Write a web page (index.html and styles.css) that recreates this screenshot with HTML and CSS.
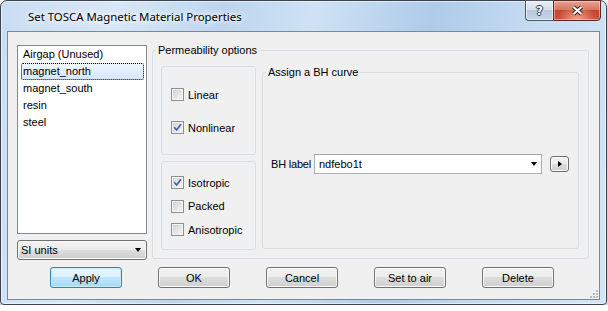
FILE: index.html
```html
<!DOCTYPE html>
<html lang="en">

<head>
    <meta charset="UTF-8">
    <meta name="viewport" content="width=device-width, initial-scale=1.0">
    <title>Set TOSCA Magnetic Material Properties</title>
    <link rel="stylesheet" href="styles.css">
</head>

<body>
    <div class="window">
        <!--title bar-->
        <div class="titlebar">
            <span class="title">Set TOSCA Magnetic Material Properties</span>
            <div class="caption">
                <div class="cap-btn help">?</div>
                <div class="cap-btn close">
                    <svg width="13" height="11" viewBox="0 0 13 11">
                        <path d="M2.5 2 L10.5 9 M10.5 2 L2.5 9" stroke="#3a1e1e" stroke-width="4.2" fill="none" />
                        <path d="M2.5 2 L10.5 9 M10.5 2 L2.5 9" stroke="#fff" stroke-width="2.2" fill="none" />
                    </svg>
                </div>
            </div>
        </div>

        <div class="client">
            <div class="main">
                <!--material list-->
                <div class="left-col">
                    <ul class="listbox">
                        <li>Airgap (Unused)</li>
                        <li class="selected">magnet_north</li>
                        <li>magnet_south</li>
                        <li>resin</li>
                        <li>steel</li>
                    </ul>
                    <div class="dropdown">
                        <span>SI units</span>
                        <span class="arrow-down"></span>
                    </div>
                </div>

                <!--permeability group-->
                <fieldset class="group perm">
                    <legend>Permeability options</legend>
                    <div class="perm-body">
                        <div class="options">
                            <div class="subgroup first">
                                <div class="check"><span class="box"></span>Linear</div>
                                <div class="check">
                                    <span class="box">
                                        <svg width="9" height="9" viewBox="0 0 9 9">
                                            <path d="M1.2 4.3 L3.6 7 L8 1.3" fill="none" stroke="#4160a0" stroke-width="1.7" />
                                        </svg>
                                    </span>Nonlinear
                                </div>
                            </div>
                            <div class="subgroup second">
                                <div class="check">
                                    <span class="box">
                                        <svg width="9" height="9" viewBox="0 0 9 9">
                                            <path d="M1.2 4.3 L3.6 7 L8 1.3" fill="none" stroke="#4160a0" stroke-width="1.7" />
                                        </svg>
                                    </span>Isotropic
                                </div>
                                <div class="check"><span class="box"></span>Packed</div>
                                <div class="check"><span class="box"></span>Anisotropic</div>
                            </div>
                        </div>

                        <fieldset class="group bh">
                            <legend>Assign a BH curve</legend>
                            <div class="bh-row">
                                <span class="bh-label">BH label</span>
                                <div class="combo">
                                    <span>ndfebo1t</span>
                                    <span class="arrow-down"></span>
                                </div>
                                <div class="small-btn"><span class="arrow-right"></span></div>
                            </div>
                        </fieldset>
                    </div>
                </fieldset>
            </div>

            <div class="buttons">
                <div class="btn default">Apply</div>
                <div class="btn">OK</div>
                <div class="btn">Cancel</div>
                <div class="btn">Set to air</div>
                <div class="btn">Delete</div>
            </div>

            <!--resize grip-->
            <svg class="grip" width="8" height="9" viewBox="0 0 8 9">
                <rect x="6" y="1" width="2" height="2" fill="#b8b8b8" />
                <rect x="6" y="4" width="2" height="2" fill="#b8b8b8" />
                <rect x="3" y="4" width="2" height="2" fill="#b8b8b8" />
                <rect x="6" y="7" width="2" height="2" fill="#b8b8b8" />
                <rect x="3" y="7" width="2" height="2" fill="#b8b8b8" />
                <rect x="0" y="7" width="2" height="2" fill="#b8b8b8" />
            </svg>
        </div>
    </div>
</body>

</html>
```

FILE: styles.css
```css
body {
    margin: 0;
    background-color: #fff;
    font-family: "Liberation Sans", Arial, sans-serif;
    font-size: 11px;
    color: #000;
}

/*aero pencere çerçevesi*/
.window {
    width: 607px;
    height: 305px;
    box-sizing: border-box;
    border: 1px solid #3a4350;
    border-radius: 7px 7px 4px 4px;
    background: linear-gradient(100deg, #c9ddf2 0%, #d7e7f7 18%, #bcd5ee 34%, #cfe2f5 48%, #aecbe9 66%, #c6dcf2 82%, #d4e5f6 100%);
    box-shadow: 0 2px 5px rgba(0, 0, 0, 0.45), inset 0 0 0 1px rgba(255, 255, 255, 0.55);
    display: flex;
    flex-direction: column;
}

.titlebar {
    height: 30px;
    display: flex;
    align-items: flex-start;
    padding: 0 5px 0 27px;
    flex-shrink: 0;
}

.title {
    font-family: "Noto Sans", sans-serif;
    font-size: 11.4px;
    line-height: 15px;
    margin-top: 8px;
    text-shadow: 0 0 8px #fff, 0 0 8px #fff, 0 0 4px rgba(255, 255, 255, 0.8);
}

.caption {
    margin-left: auto;
    margin-top: -1px;
    display: flex;
}

.cap-btn {
    height: 21px;
    box-sizing: border-box;
    border: 1px solid #4b5868;
    display: flex;
    align-items: center;
    justify-content: center;
}

.help {
    width: 28px;
    border-right: none;
    border-radius: 0 0 0 4px;
    background: linear-gradient(#e8eef6 0%, #d5e0ec 45%, #b9c9dc 50%, #c4d3e3 100%);
    box-shadow: inset 0 0 0 1px rgba(255, 255, 255, 0.6);
    font-family: "DejaVu Sans", sans-serif;
    font-weight: bold;
    font-size: 12px;
    color: #fff;
    text-shadow: 1px 0 0 #2d3848, -1px 0 0 #2d3848, 0 1px 0 #2d3848, 0 -1px 0 #2d3848;
}

.close {
    width: 48px;
    border-color: #5a2a24;
    border-radius: 0 0 4px 0;
    background: radial-gradient(ellipse at 50% 100%, #eea48a 0%, rgba(238, 164, 138, 0) 60%), linear-gradient(#e7a596 0%, #d9735f 45%, #c54631 50%, #c9503a 100%);
    box-shadow: inset 0 0 0 1px rgba(255, 220, 210, 0.5);
}

/*pencere içeriği*/
.client {
    flex: 1;
    margin: 0 6px 4px;
    background-color: #f0f0f0;
    border: 1px solid #7b8898;
    padding: 12px 10px 0 9px;
    display: flex;
    flex-direction: column;
    position: relative;
}

.main {
    display: flex;
    gap: 5px;
    height: 216px;
}

.left-col {
    width: 130px;
    display: flex;
    flex-direction: column;
    gap: 6px;
}

.listbox {
    list-style: none;
    margin: 1px 0 0;
    padding: 0;
    height: 189px;
    box-sizing: border-box;
    background-color: #fff;
    border: 1px solid #828790;
}

.listbox li {
    height: 17px;
    line-height: 15px;
    box-sizing: border-box;
    margin: 0 2px 0 3px;
    padding: 0 1px;
    border: 1px solid transparent;
    white-space: nowrap;
}

/*seçili malzeme*/
.listbox li.selected {
    border: 1px dotted #000;
    border-radius: 2px;
    background: linear-gradient(#eef5fd, #d6e7fb);
}

.dropdown {
    height: 20px;
    box-sizing: border-box;
    border: 1px solid #707070;
    border-radius: 3px;
    background: linear-gradient(#f2f2f2 0%, #ebebeb 50%, #dddddd 50%, #cfcfcf 100%);
    box-shadow: inset 0 0 0 1px #fbfbfb;
    display: flex;
    align-items: center;
    justify-content: space-between;
    padding: 0 5px 0 3px;
}

.arrow-down {
    width: 0;
    height: 0;
    border-left: 3.5px solid transparent;
    border-right: 3.5px solid transparent;
    border-top: 4px solid #000;
}

.arrow-right {
    width: 0;
    height: 0;
    border-top: 3.5px solid transparent;
    border-bottom: 3.5px solid transparent;
    border-left: 4px solid #000;
}

/*grup kutuları*/
.group {
    margin: 0;
    border: 1px solid #d5dfe5;
    border-radius: 3px;
    min-width: 0;
}

.group legend {
    padding: 0 2px;
    margin-left: -5px;
    line-height: 13px;
}

.perm {
    flex: 1;
    margin-bottom: 1px;
    padding: 9px 9px 8px 8px;
}

.perm-body {
    display: flex;
    gap: 6px;
    height: 100%;
}

.options {
    width: 95px;
    display: flex;
    flex-direction: column;
    gap: 6px;
}

.subgroup {
    border: 1px solid #d5dfe5;
    border-radius: 3px;
    padding-left: 9px;
    display: flex;
    flex-direction: column;
}

.subgroup.first {
    height: 89px;
    box-sizing: border-box;
    padding-top: 21px;
    gap: 20px;
}

.subgroup.second {
    flex: 1;
    padding-top: 14px;
    gap: 10.5px;
}

.check {
    display: flex;
    align-items: center;
    gap: 4px;
    height: 13px;
    white-space: nowrap;
}

.box {
    width: 13px;
    height: 13px;
    box-sizing: border-box;
    border: 1px solid #8e8f8f;
    background: linear-gradient(135deg, #c9ccd1 0%, #e6e7e9 55%, #f7f7f7 100%);
    box-shadow: inset 0 0 0 1px #f4f4f4;
    display: flex;
    align-items: center;
    justify-content: center;
    flex-shrink: 0;
}

.bh {
    flex: 1;
    margin-bottom: 1px;
    padding: 0 9px 0 8px;
    display: flex;
    flex-direction: column;
    justify-content: center;
}

.bh-row {
    display: flex;
    align-items: center;
}

.bh-label {
    flex-shrink: 0;
    margin-right: 3px;
    letter-spacing: -0.2px;
}

.combo {
    flex: 1;
    height: 20px;
    box-sizing: border-box;
    background-color: #fff;
    border: 1px solid #abadb3;
    border-top-color: #a2a4a9;
    display: flex;
    align-items: center;
    justify-content: space-between;
    padding: 0 4px 0 4px;
}

.small-btn {
    width: 19px;
    height: 16px;
    margin-left: 8px;
    box-sizing: border-box;
    border: 1px solid #707070;
    border-radius: 3px;
    background: linear-gradient(#f2f2f2 0%, #ebebeb 50%, #dddddd 50%, #cfcfcf 100%);
    box-shadow: inset 0 0 0 1px #fbfbfb;
    display: flex;
    align-items: center;
    justify-content: center;
}

/*alt butonlar*/
.buttons {
    display: flex;
    gap: 36px;
    margin-top: 7px;
    padding-left: 33px;
}

.btn {
    width: 72px;
    height: 21px;
    box-sizing: border-box;
    border: 1px solid #707070;
    border-radius: 3px;
    background: linear-gradient(#f2f2f2 0%, #ebebeb 50%, #dddddd 50%, #cfcfcf 100%);
    box-shadow: inset 0 0 0 1px #fbfbfb;
    display: flex;
    align-items: center;
    justify-content: center;
}

.btn.default {
    border-color: #3c7fb1;
    background: linear-gradient(#eaf6fd 0%, #d9f0fc 50%, #bee6fd 50%, #a7d9f5 100%);
    box-shadow: inset 0 0 0 1px #c6ecfc;
}

.grip {
    position: absolute;
    right: 1px;
    bottom: 1px;
}
```
